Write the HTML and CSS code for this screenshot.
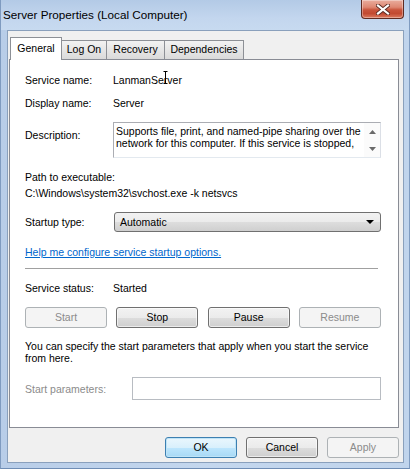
FILE: index.html
```html
<!DOCTYPE html>
<html>
<head>
<meta charset="utf-8">
<link rel="stylesheet" href="styles.css">
</head>
<body>
<div class="window">
  <div class="titlebar">
    <span class="title">Server Properties (Local Computer)</span>
    <div class="close">
      <svg width="14" height="11" viewBox="0 0 14 11">
        <path d="M2 1.5 L12 9.5 M12 1.5 L2 9.5" stroke="#5a2a22" stroke-width="4" stroke-linecap="square"/>
        <path d="M2 1.5 L12 9.5 M12 1.5 L2 9.5" stroke="#ffffff" stroke-width="2.2" stroke-linecap="square"/>
      </svg>
    </div>
  </div>
  <div class="client">
    <div class="tabs">
      <div class="tab active tab-general">General</div>
      <div class="tab tab-logon">Log On</div>
      <div class="tab tab-recovery">Recovery</div>
      <div class="tab tab-deps">Dependencies</div>
    </div>
    <div class="panel">
      <div class="row"><span class="label">Service name:</span><span class="value">LanmanSe<span class="cursor-wrap">r<svg class="ibeam" width="5" height="13" viewBox="0 0 5 13"><path d="M0.5 0.5 H4.5 M2.5 0.5 V12.5 M0.5 12.5 H4.5" stroke="#000" stroke-width="1" fill="none"/></svg></span>ver</span></div>
      <div class="row"><span class="label">Display name:</span><span class="value">Server</span></div>
      <div class="desc-row">
        <span class="label desc-label">Description:</span>
        <div class="desc-box">
          <div class="desc-text">Supports file, print, and named-pipe sharing over the<br>network for this computer. If this service is stopped,</div>
          <div class="scroll">
            <svg width="7" height="4" viewBox="0 0 7 4"><path d="M0 4 L3.5 0 L7 4 Z" fill="#6a6a6a"/></svg>
            <svg width="7" height="4" viewBox="0 0 7 4"><path d="M0 0 L3.5 4 L7 0 Z" fill="#6a6a6a"/></svg>
          </div>
        </div>
      </div>
      <div class="path-label">Path to executable:</div>
      <div class="path-value">C:\Windows\system32\svchost.exe -k netsvcs</div>
      <div class="startup-row">
        <span class="label">Startup type:</span>
        <div class="select">
          <span>Automatic</span>
          <svg width="8" height="4" viewBox="0 0 8 4"><path d="M0 0 L8 0 L4 4 Z" fill="#000"/></svg>
        </div>
      </div>
      <a class="link" href="#">Help me configure service startup options.</a>
      <div class="separator"></div>
      <div class="status-row"><span class="label">Service status:</span><span class="value">Started</span></div>
      <div class="svc-buttons">
        <div class="btn disabled">Start</div>
        <div class="btn">Stop</div>
        <div class="btn">Pause</div>
        <div class="btn disabled">Resume</div>
      </div>
      <p class="para">You can specify the start parameters that apply when you start the service<br>from here.</p>
      <div class="params-row">
        <span class="params-label">Start parameters:</span>
        <div class="params-input"></div>
      </div>
    </div>
    <div class="footer">
      <div class="btn foot default">OK</div>
      <div class="btn foot">Cancel</div>
      <div class="btn foot disabled">Apply</div>
    </div>
  </div>
</div>
</body>
</html>
```
FILE: styles.css
```css
* { box-sizing: border-box; }
html, body { margin: 0; padding: 0; }
body {
  width: 410px;
  height: 469px;
  overflow: hidden;
  font-family: "Liberation Sans", Arial, sans-serif;
  font-size: 10.5px;
  color: #000;
}
.window {
  width: 410px;
  height: 469px;
  background: linear-gradient(90deg, #b8cde8 0%, #c4d7ee 50%, #c0d4ec 100%);
  border-left: 1px solid #7f9bc0;
  border-right: 1px solid #7f9bc0;
  border-bottom: 1px solid #6f8db5;
  display: flex;
  flex-direction: column;
}
.titlebar {
  height: 30px;
  display: flex;
  align-items: flex-start;
  padding-left: 2px;
  background: linear-gradient(180deg, #b3cae6 0%, #c3d6ee 60%, #c7daf0 100%);
}
.title {
  font-size: 11.7px;
  line-height: 14px;
  margin-top: 8px;
  color: #000;
}
.close {
  margin-left: auto;
  margin-right: 5px;
  width: 43px;
  height: 19px;
  border: 1px solid #5f2b22;
  border-top: none;
  border-radius: 0 0 4px 4px;
  background: linear-gradient(180deg, #e9ad9e 0%, #de8772 40%, #c9543c 55%, #c24a31 75%, #dc7a5f 100%);
  box-shadow: inset 0 0 0 1px rgba(255,255,255,0.35);
  display: flex;
  align-items: center;
  justify-content: center;
}
.client {
  flex: 1;
  margin: 0 5px 5px 6px;
  background: #f0f0f0;
  border: 1px solid #8aa0bc;
  display: flex;
  flex-direction: column;
}
.tabs {
  display: flex;
  align-items: flex-end;
  margin-top: 6px;
  margin-left: 2px;
  height: 23px;
  margin-bottom: -1px;
  position: relative;
  z-index: 2;
}
.tab {
  height: 19px;
  margin-bottom: 1px;
  margin-left: -1px;
  line-height: 17px;
  text-align: center;
  border: 1px solid #8d9096;
  border-bottom: none;
  background: linear-gradient(180deg, #f2f2f2 0%, #e6e6e6 50%, #dadada 100%);
  white-space: nowrap;
}
.tab-general { width: 52px; }
.tab-logon { width: 46px; }
.tab-recovery { width: 59px; }
.tab-deps { width: 80px; }
.tab.active {
  height: 23px;
  margin-bottom: 0;
  margin-left: 0;
  line-height: 20px;
  background: #fff;
  position: relative;
  z-index: 2;
}
.panel {
  margin-left: 1px;
  width: 390px;
  height: 369px;
  background: #fff;
  border: 1px solid #898c95;
  padding: 9px 0 0 15px;
  position: relative;
  z-index: 1;
}
.label {
  width: 88px;
  flex: none;
}
.row {
  display: flex;
  height: 23px;
  line-height: 23px;
}
.cursor-wrap { position: relative; }
.ibeam {
  position: absolute;
  left: -1px;
  top: -3px;
}
.desc-row {
  display: flex;
  margin-top: 7px;
}
.desc-label {
  padding-top: 6px;
  line-height: 14px;
}
.desc-box {
  width: 268px;
  height: 36px;
  border: 1px solid #abadb3;
  border-bottom-color: #e3e9ef;
  border-right-color: #dbdfe6;
  display: flex;
  overflow: hidden;
}
.desc-text {
  flex: 1;
  padding: 3px 0 0 2px;
  line-height: 11.5px;
  white-space: nowrap;
}
.scroll {
  width: 16px;
  display: flex;
  flex-direction: column;
  align-items: center;
  justify-content: space-between;
  padding: 7px 0 6px 0;
  background: #fbfbfb;
}
.path-label {
  margin-top: 11px;
  line-height: 16px;
}
.path-value {
  line-height: 16px;
}
.startup-row {
  display: flex;
  margin-top: 11px;
  line-height: 20px;
}
.select {
  width: 267px;
  height: 20px;
  margin-left: 1px;
  border: 1px solid #707070;
  border-radius: 3px;
  background: linear-gradient(180deg, #f2f2f2 0%, #ebebeb 50%, #dddddd 51%, #cfcfcf 100%);
  display: flex;
  align-items: center;
  justify-content: space-between;
  padding: 0 6px 0 5px;
  line-height: 18px;
}
.link {
  display: block;
  margin-top: 12px;
  line-height: 16px;
  color: #0066cc;
  text-decoration: underline;
  width: max-content;
}
.separator {
  margin-top: 8px;
  width: 353px;
  border-top: 1px solid #a0a0a0;
  border-bottom: 1px solid #ffffff;
}
.status-row {
  display: flex;
  margin-top: 10px;
  line-height: 16px;
}
.svc-buttons {
  margin-top: 11px;
  width: 355px;
  display: grid;
  grid-template-columns: repeat(4, 82px);
  column-gap: 9.3px;
}
.btn {
  height: 21px;
  line-height: 19px;
  text-align: center;
  border: 1px solid #707070;
  border-radius: 3px;
  background: linear-gradient(180deg, #f2f2f2 0%, #ebebeb 50%, #dddddd 51%, #cfcfcf 100%);
  box-shadow: inset 0 0 0 1px rgba(255,255,255,0.6);
}
.btn.disabled {
  border-color: #adb2b5;
  background: #f4f4f4;
  color: #8b8b8b;
  box-shadow: none;
}
.para {
  margin: 12px 0 0 0;
  line-height: 12px;
}
.params-row {
  display: flex;
  width: 356px;
  margin-top: 13px;
  align-items: center;
}
.params-label {
  color: #8b8b8b;
  flex: 0 0 auto;
}
.params-input {
  margin-left: auto;
  flex: 0 0 249px;
  width: 249px;
  max-width: 249px;
  height: 23px;
  border: 1px solid #b8bcc2;
  background: #fff;
}
.footer {
  margin-left: 1px;
  width: 390px;
  margin-top: 9px;
  display: flex;
  justify-content: flex-end;
  gap: 9px;
}
.btn.foot {
  width: 72px;
}
.btn.default {
  border-color: #3c7fb1;
  background: linear-gradient(180deg, #eaf6fd 0%, #d9f0fc 50%, #bee6fd 51%, #a7d9f5 100%);
  box-shadow: inset 0 0 0 1px #bfe4f7;
}
```
